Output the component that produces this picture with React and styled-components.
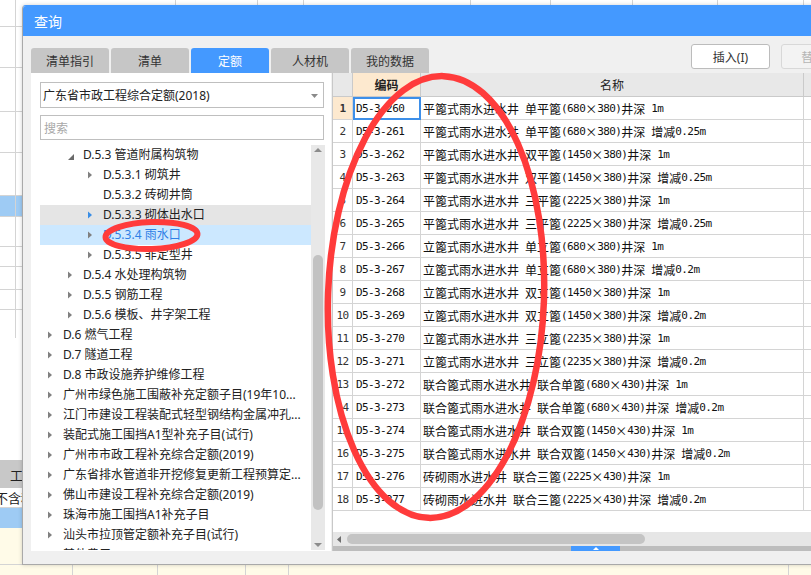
import React from "react"
import styled, { createGlobalStyle } from "styled-components"

const UI_FONT = `"Noto Sans", "Noto Sans CJK SC", sans-serif`
const CJK_FONT = `"Noto Sans CJK SC", sans-serif`
const HALF_FONT = `"DejaVu Sans Mono", "Liberation Mono", monospace`
const BLUE = "#4499ff"
const LINE = "#d4d4d4"

const GlobalStyle = createGlobalStyle`
	html, body {
		margin: 0;
		padding: 0;
		background: #fff;
	}
	body {
		font-family: ${UI_FONT};
		overflow: hidden;
	}
`

const Desktop = styled.div`
	position: relative;
	width: 811px;
	height: 575px;
	overflow: hidden;
	background: #fff;
`

/* ---------- spreadsheet behind the dialog ---------- */

const Sheet = styled.div`
	display: flex;
	flex-direction: column;
	height: 100%;
`

const SheetRow = styled.div`
	display: flex;
	flex: none;
	height: ${p => p.h}px;
	box-sizing: border-box;
	background: ${p => p.bg || "#fff"};
	border-bottom: ${p => (p.line ? `1px solid ${LINE}` : "none")};
	overflow: hidden;
`

const SheetCell = styled.div`
	flex: none;
	width: ${p => p.w}px;
	height: 100%;
	box-sizing: border-box;
	border-right: ${p => (p.line === false ? "none" : `1px solid ${LINE}`)};
	font: 13px/1 ${CJK_FONT};
	color: #222;
	display: flex;
	align-items: center;
	padding-left: ${p => p.pad || 0}px;
	margin-left: ${p => p.shift || 0}px;
	white-space: nowrap;
`

const SheetGap = styled.div`
	flex: 1;
`

const topCols = [16, 160, 82, 46, 167, 80, 82, 85, 86, 40]
const bottomCols = [73, 85, 88, 43, 500]

function GridRow({ h, bg, line = true }) {
	return (
		<SheetRow h={h} bg={bg} line={line}>
			{topCols.map((w, i) => (
				<SheetCell key={i} w={w} />
			))}
		</SheetRow>
	)
}

/* ---------- dialog ---------- */

const Dialog = styled.div`
	position: absolute;
	left: 22px;
	top: 5px;
	width: 848px;
	height: 560px;
	box-sizing: border-box;
	border: 1px solid #a9a9a9;
	border-top-color: ${BLUE};
	border-radius: 4px 4px 0 0;
	background: #f0f0f0;
	box-shadow: 0 0 4px rgba(0, 0, 0, 0.18);
	display: flex;
	flex-direction: column;
`

const TitleBar = styled.div`
	height: 30px;
	flex: none;
	background: ${BLUE};
	border-radius: 3px 3px 0 0;
	color: #fff;
	font: 14px ${CJK_FONT};
	display: flex;
	align-items: center;
	padding-left: 11px;
`

const Body = styled.div`
	flex: 1;
	display: flex;
	flex-direction: column;
	padding: 0 9px 13px 8px;
	min-height: 0;
`

const TopRow = styled.div`
	height: 37px;
	flex: none;
	display: flex;
	align-items: flex-end;
`

const Tabs = styled.div`
	display: flex;
	gap: 2px;
`

const Tab = styled.div`
	width: 78px;
	height: 25px;
	display: flex;
	align-items: center;
	justify-content: center;
	border-radius: 3px 3px 0 0;
	font: 12px ${CJK_FONT};
	background: ${p => (p.active ? BLUE : "#c6c6c6")};
	color: ${p => (p.active ? "#fff" : "#333")};
`

const Actions = styled.div`
	margin-left: auto;
	align-self: flex-start;
	margin-top: 8px;
	display: flex;
	gap: 11px;
`

const ActionButton = styled.div`
	width: 79px;
	height: 25px;
	box-sizing: border-box;
	border: 1px solid ${p => (p.disabled ? "#d8d8d8" : "#bcbcbc")};
	border-radius: 3px;
	background: ${p => (p.disabled ? "#f3f3f3" : "#fff")};
	color: ${p => (p.disabled ? "#b5b5b5" : "#333")};
	font: 12px ${UI_FONT};
	display: flex;
	align-items: center;
	justify-content: center;
`

const Main = styled.div`
	flex: 1;
	display: flex;
	gap: 1px;
	min-height: 0;
`

/* ---------- left panel ---------- */

const LeftPanel = styled.div`
	width: 300px;
	flex: none;
	box-sizing: border-box;
	background: #fff;
	padding: 9px 0 1px 9px;
	display: flex;
	flex-direction: column;
`

const Select = styled.div`
	width: 284px;
	height: 26px;
	box-sizing: border-box;
	border: 1px solid #bfbfbf;
	display: flex;
	align-items: center;
	padding: 0 5px 0 2px;
	font: 12px ${UI_FONT};
	color: #222;
`

const Caret = styled.svg`
	margin-left: auto;
	margin-top: 1px;
`

const Search = styled.div`
	width: 284px;
	height: 25px;
	margin-top: 7px;
	box-sizing: border-box;
	border: 1px solid #bfbfbf;
	display: flex;
	align-items: center;
	padding-left: 3px;
	font: 12px ${CJK_FONT};
	color: #a8a8a8;
`

const Tree = styled.div`
	flex: 1;
	margin-top: 5px;
	width: 285px;
	display: flex;
	min-height: 0;
`

const TreeList = styled.div`
	flex: 1;
	overflow: hidden;
	display: flex;
	flex-direction: column;
`

const TreeRow = styled.div`
	height: 20px;
	flex: none;
	display: flex;
	align-items: center;
	padding-left: ${p => 8 + (p.level - 1) * 20}px;
	background: ${p => (p.selected ? "#cce8ff" : p.hover ? "#e5e5e5" : "transparent")};
	color: ${p => (p.selected ? "#2f7fe6" : "#222")};
	font: 12px/20px ${UI_FONT};
	white-space: nowrap;
	overflow: hidden;
`

const Twisty = styled.span`
	width: 15px;
	flex: none;
	display: flex;
	align-items: center;
`

const VScroll = styled.div`
	width: 14px;
	flex: none;
	background: #e8e8e8;
	display: flex;
	flex-direction: column;
	align-items: center;
`

const ScrollArrow = styled.div`
	height: 10px;
	flex: none;
	display: flex;
	align-items: center;
	justify-content: center;
	margin-top: ${p => (p.bottom ? "auto" : "0")};
`

const VThumb = styled.div`
	width: 10px;
	flex: none;
	border-radius: 5px;
	background: #c2c2c2;
	margin-top: ${p => p.offset}px;
	height: ${p => p.size}px;
`

/* ---------- right panel (grid) ---------- */

const RightPanel = styled.div`
	flex: 1;
	background: #fff;
	border-left: 1px solid #c8c8c8;
	display: flex;
	flex-direction: column;
	min-width: 0;
`

const Row = styled.div`
	display: flex;
	flex: none;
	height: ${p => p.h}px;
`

const Cell = styled.div`
	flex: ${p => (p.w ? "none" : 1)};
	width: ${p => (p.w ? `${p.w}px` : "auto")};
	box-sizing: border-box;
	border-right: 1px solid ${LINE};
	border-bottom: 1px solid ${LINE};
	display: flex;
	align-items: center;
	white-space: nowrap;
	overflow: hidden;
	color: #111;
`

const HeadCell = styled(Cell)`
	justify-content: center;
	background: ${p => (p.active ? "#fde9cf" : "#e8e8e8")};
	border-color: #cacaca;
	font: ${p => (p.active ? 700 : 400)} 12px ${CJK_FONT};
	color: #222;
`

const NumCell = styled(Cell)`
	justify-content: center;
	background: ${p => (p.active ? "#fde9cf" : "#fff")};
	font: ${p => (p.active ? 700 : 400)} 11px ${HALF_FONT};
	letter-spacing: -0.6px;
	color: #333;
`

const CodeCell = styled(Cell)`
	padding-left: 3px;
	font: 11px ${HALF_FONT};
	letter-spacing: -0.6px;
	outline: ${p => (p.focused ? "2px solid #3d8fe9" : "none")};
	outline-offset: -2px;
`

const NameCell = styled(Cell)`
	padding-left: 2px;
	font: 12px ${CJK_FONT};
`

const Half = styled.span`
	font: 11px ${HALF_FONT};
	letter-spacing: -0.6px;
	white-space: pre;
`

const Filler = styled.div`
	flex: 1;
`

const HScroll = styled.div`
	height: 14px;
	flex: none;
	background: #e6e6e6;
	display: flex;
	align-items: center;
	padding-left: 4px;
`

const HThumb = styled.div`
	width: 298px;
	height: 10px;
	margin-left: 6px;
	border-radius: 5px;
	background: #c4c4c4;
`

const Splitter = styled.div`
	height: 5px;
	flex: none;
	background: #bdbdbd;
	display: flex;
`

const SplitHandle = styled.div`
	width: 49px;
	margin-left: 238px;
	background: ${BLUE};
	display: flex;
	align-items: center;
	justify-content: center;
`

/* ---------- annotation ---------- */

const Marks = styled.svg`
	position: absolute;
	left: 0;
	top: 0;
	pointer-events: none;
`

/* ---------- data ---------- */

const tabs = ["清单指引", "清单", "定额", "人材机", "我的数据"]

const treeItems = [
	{ level: 2, label: "D.5.3 管道附属构筑物", twisty: "open" },
	{ level: 3, label: "D.5.3.1 砌筑井", twisty: "closed" },
	{ level: 3, label: "D.5.3.2 砖砌井筒" },
	{ level: 3, label: "D.5.3.3 砌体出水口", twisty: "closed", hover: true },
	{ level: 3, label: "D.5.3.4 雨水口", twisty: "closed", selected: true },
	{ level: 3, label: "D.5.3.5 非定型井", twisty: "closed" },
	{ level: 2, label: "D.5.4 水处理构筑物", twisty: "closed" },
	{ level: 2, label: "D.5.5 钢筋工程", twisty: "closed" },
	{ level: 2, label: "D.5.6 模板、井字架工程", twisty: "closed" },
	{ level: 1, label: "D.6 燃气工程", twisty: "closed" },
	{ level: 1, label: "D.7 隧道工程", twisty: "closed" },
	{ level: 1, label: "D.8 市政设施养护维修工程", twisty: "closed" },
	{ level: 1, label: "广州市绿色施工围蔽补充定额子目(19年10...", twisty: "closed" },
	{ level: 1, label: "江门市建设工程装配式轻型钢结构金属冲孔...", twisty: "closed" },
	{ level: 1, label: "装配式施工围挡A1型补充子目(试行)", twisty: "closed" },
	{ level: 1, label: "广州市市政工程补充综合定额(2019)", twisty: "closed" },
	{ level: 1, label: "广东省排水管道非开挖修复更新工程预算定...", twisty: "closed" },
	{ level: 1, label: "佛山市建设工程补充综合定额(2019)", twisty: "closed" },
	{ level: 1, label: "珠海市施工围挡A1补充子目", twisty: "closed" },
	{ level: 1, label: "汕头市拉顶管定额补充子目(试行)", twisty: "closed" },
	{ level: 1, label: "其他费用", twisty: "closed" },
]

const quotaRows = [
	["D5-3-260", "平篦式雨水进水井 单平篦(680×380)井深 1m"],
	["D5-3-261", "平篦式雨水进水井 单平篦(680×380)井深 增减0.25m"],
	["D5-3-262", "平篦式雨水进水井 双平篦(1450×380)井深 1m"],
	["D5-3-263", "平篦式雨水进水井 双平篦(1450×380)井深 增减0.25m"],
	["D5-3-264", "平篦式雨水进水井 三平篦(2225×380)井深 1m"],
	["D5-3-265", "平篦式雨水进水井 三平篦(2225×380)井深 增减0.25m"],
	["D5-3-266", "立篦式雨水进水井 单立篦(680×380)井深 1m"],
	["D5-3-267", "立篦式雨水进水井 单立篦(680×380)井深 增减0.2m"],
	["D5-3-268", "立篦式雨水进水井 双立篦(1450×380)井深 1m"],
	["D5-3-269", "立篦式雨水进水井 双立篦(1450×380)井深 增减0.2m"],
	["D5-3-270", "立篦式雨水进水井 三立篦(2235×380)井深 1m"],
	["D5-3-271", "立篦式雨水进水井 三立篦(2235×380)井深 增减0.2m"],
	["D5-3-272", "联合篦式雨水进水井 联合单篦(680×430)井深 1m"],
	["D5-3-273", "联合篦式雨水进水井 联合单篦(680×430)井深 增减0.2m"],
	["D5-3-274", "联合篦式雨水进水井 联合双篦(1450×430)井深 1m"],
	["D5-3-275", "联合篦式雨水进水井 联合双篦(1450×430)井深 增减0.2m"],
	["D5-3-276", "砖砌雨水进水井 联合三篦(2225×430)井深 1m"],
	["D5-3-277", "砖砌雨水进水井 联合三篦(2225×430)井深 增减0.2m"],
]

// half-width runs get the narrow mono font, like SimSun does
function MixedText({ text }) {
	return text.split(/([\x20-\x7e]+)/).map((part, i) =>
		/^[\x20-\x7e]+$/.test(part) ? <Half key={i}>{part}</Half> : <span key={i}>{part}</span>
	)
}

function TwistyIcon({ kind, blue }) {
	if (kind === "open") {
		return (
			<svg width="7" height="7" viewBox="0 0 7 7" style={{ marginTop: 4 }}>
				<polygon points="6,0 6,6 0,6" fill="#6a6a6a" />
			</svg>
		)
	}
	if (kind === "closed") {
		return (
			<svg width="5" height="8" viewBox="0 0 5 8">
				<polygon points="0,0.5 4,4 0,7.5" fill={blue ? "#3a8ee6" : "#808080"} />
			</svg>
		)
	}
	return null
}

export default function App() {
	return (
		<Desktop>
			<GlobalStyle />
			<Sheet>
				<GridRow h={27} />
				<GridRow h={41} />
				<GridRow h={44} />
				<GridRow h={41} />
				<GridRow h={43} />
				<GridRow h={21} bg="#9ecbf4" />
				<GridRow h={30} />
				<GridRow h={20} />
				<GridRow h={23} />
				<GridRow h={20} />
				<GridRow h={28} line={false} />
				<SheetGap />
				<SheetRow h={28} bg="#c8c8c8">
					<SheetCell w={120} pad={10} line={false}>
						工程量
					</SheetCell>
				</SheetRow>
				<SheetRow h={20} line>
					<SheetCell w={120} line={false} shift={-5}>
						不含税
					</SheetCell>
				</SheetRow>
				<SheetRow h={20} bg="#9ecbf4" />
				<SheetRow h={37} bg="#fffbe8" line />
				<SheetRow h={10} bg="#fffbe8">
					{bottomCols.map((w, i) => (
						<SheetCell key={i} w={w} />
					))}
				</SheetRow>
			</Sheet>

			<Dialog>
				<TitleBar>查询</TitleBar>
				<Body>
					<TopRow>
						<Tabs>
							{tabs.map(t => (
								<Tab key={t} active={t === "定额"}>
									{t}
								</Tab>
							))}
						</Tabs>
						<Actions>
							<ActionButton>插入(I)</ActionButton>
							<ActionButton disabled>替换(R)</ActionButton>
						</Actions>
					</TopRow>

					<Main>
						<LeftPanel>
							<Select>
								广东省市政工程综合定额(2018)
								<Caret width="7" height="4" viewBox="0 0 7 4">
									<polygon points="0,0 7,0 3.5,4" fill="#8a8a8a" />
								</Caret>
							</Select>
							<Search>搜索</Search>
							<Tree>
								<TreeList>
									{treeItems.map(item => (
										<TreeRow
											key={item.label}
											level={item.level}
											hover={item.hover}
											selected={item.selected}
										>
											<Twisty>
												<TwistyIcon kind={item.twisty} blue={item.hover} />
											</Twisty>
											{item.label}
										</TreeRow>
									))}
								</TreeList>
								<VScroll>
									<ScrollArrow>
										<svg width="8" height="4" viewBox="0 0 8 4">
											<polygon points="0,4 8,4 4,0" fill="#8c8c8c" />
										</svg>
									</ScrollArrow>
									<VThumb offset={100} size={255} />
									<ScrollArrow bottom>
										<svg width="8" height="4" viewBox="0 0 8 4">
											<polygon points="0,0 8,0 4,4" fill="#8c8c8c" />
										</svg>
									</ScrollArrow>
								</VScroll>
							</Tree>
						</LeftPanel>

						<RightPanel>
							<Row h={24}>
								<HeadCell w={20} />
								<HeadCell w={68} active>
									编码
								</HeadCell>
								<HeadCell w={383}>名称</HeadCell>
								<HeadCell />
							</Row>
							{quotaRows.map(([code, name], i) => (
								<Row key={code} h={23}>
									<NumCell w={20} active={i === 0}>
										{i + 1}
									</NumCell>
									<CodeCell w={68} focused={i === 0}>
										{code}
									</CodeCell>
									<NameCell w={383}>
										<MixedText text={name} />
									</NameCell>
									<Cell />
								</Row>
							))}
							<Filler />
							<HScroll>
								<svg width="4" height="7" viewBox="0 0 4 7">
									<polygon points="4,0 4,7 0,3.5" fill="#6e6e6e" />
								</svg>
								<HThumb />
							</HScroll>
							<Splitter>
								<SplitHandle>
									<svg width="6" height="3" viewBox="0 0 6 3">
										<polygon points="0,3 6,3 3,0" fill="#fff" />
									</svg>
								</SplitHandle>
							</Splitter>
						</RightPanel>
					</Main>
				</Body>
			</Dialog>

			<Marks width="811" height="575" viewBox="0 0 811 575">
				<ellipse
					cx="436"
					cy="297"
					rx="108"
					ry="221"
					transform="rotate(2 436 297)"
					fill="none"
					stroke="#ff3b3b"
					strokeWidth="6.5"
				/>
				<ellipse
					cx="151.5"
					cy="235.5"
					rx="46"
					ry="13.5"
					transform="rotate(-2 151.5 235.5)"
					fill="none"
					stroke="#ff3b3b"
					strokeWidth="6"
				/>
			</Marks>
		</Desktop>
	)
}
